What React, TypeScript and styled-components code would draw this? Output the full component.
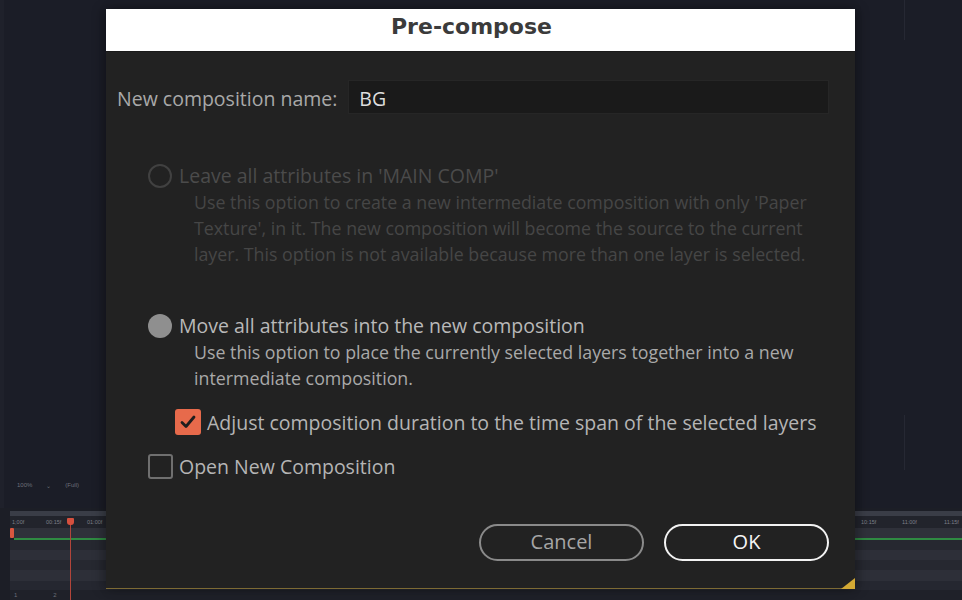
import React from "react";
import styled, { createGlobalStyle } from "styled-components";

const Global = createGlobalStyle`
  html, body { margin: 0; padding: 0; background: #1b1d27; }
  body { width: 962px; height: 600px; overflow: hidden; }
  * { box-sizing: border-box; }
`;

const Stage = styled.div`
  position: relative;
  width: 962px;
  height: 600px;
  overflow: hidden;
  background: #1b1d27;
  font-family: "Open Sans", "Noto Sans", sans-serif;
`;

/* ---------- background application ---------- */
const AppShell = styled.div`
  display: flex;
  flex-direction: column;
  height: 100%;
`;

const Viewer = styled.div`
  position: relative;
  flex: 1;
  display: flex;
  flex-direction: column;
  justify-content: flex-end;
  background: #1b1d27;
  border-left: 4px solid #1f212b;
`;

const ViewerToolbar = styled.div`
  height: 14px;
  margin-bottom: 16px;
  display: flex;
  align-items: center;
  gap: 14px;
  padding-left: 13px;
  font-family: "Liberation Sans", sans-serif;
  font-size: 6px;
  color: #6d707a;
`;

const ToolText = styled.span``;

const Guide = styled.div<{ $top: number; $h: number }>`
  position: absolute;
  left: 900px;
  top: ${(p) => p.$top}px;
  width: 1px;
  height: ${(p) => p.$h}px;
  background: #262833;
`;

const Timeline = styled.div`
  position: relative;
  height: 92px;
  display: flex;
  flex-direction: column;
  background: #1c1e26;
  padding-left: 10px;
`;

const RulerBar = styled.div`
  height: 5px;
  margin-top: 3px;
  background: #3a3d47;
`;

const TimeLabels = styled.div`
  height: 12px;
  display: flex;
  align-items: center;
  background: #22242c;
  font-family: "Liberation Sans", sans-serif;
  font-size: 5.5px;
  color: #7c7f88;
`;

const TimeLabel = styled.span<{ $x: number }>`
  position: absolute;
  left: ${(p) => p.$x}px;
`;

const LayerRow = styled.div<{ $shade: string; $h: number; $green?: boolean }>`
  height: ${(p) => p.$h}px;
  background: ${(p) => p.$shade};
  border-bottom: ${(p) => (p.$green ? "2px solid #2f8b42" : "none")};
  margin-left: ${(p) => (p.$green ? "4px" : "0")};
`;

const RowNumbers = styled.div`
  flex: 1;
  display: flex;
  gap: 36px;
  align-items: center;
  padding-left: 4px;
  font-family: "Liberation Sans", sans-serif;
  font-size: 6px;
  color: #6c6f78;
  background: #1f2129;
`;

const Playhead = styled.div`
  position: absolute;
  left: 70px;
  top: 12px;
  bottom: 0;
  width: 1px;
  background: #b2453a;
  &::before {
    content: "";
    position: absolute;
    left: -3px;
    top: -2px;
    width: 7px;
    height: 7px;
    border-radius: 1px 1px 3px 3px;
    background: #d5503e;
  }
`;

const StartMarker = styled.div`
  position: absolute;
  left: 10px;
  top: 20px;
  width: 4px;
  height: 10px;
  border-radius: 1px;
  background: #d8563f;
`;

/* ---------- dialog ---------- */
const Dialog = styled.div`
  position: absolute;
  left: 106px;
  top: 9px;
  width: 749px;
  height: 580px;
  display: flex;
  flex-direction: column;
  background: #222222;
  box-shadow: -4px 0 10px rgba(0, 0, 0, 0.25), 4px 0 10px rgba(0, 0, 0, 0.25);
`;

const TitleBar = styled.div`
  height: 43px;
  flex: none;
  display: flex;
  align-items: center;
  justify-content: center;
  background: #ffffff;
  border-bottom: 1px solid #1a1a1a;
  font-family: "DejaVu Sans", sans-serif;
  font-weight: 700;
  font-size: 22px;
  color: #3b3b3b;
  padding: 0 18px 8px 0;
`;

const Body = styled.div`
  position: relative;
  flex: 1;
  display: flex;
  flex-direction: column;
  padding: 28px 26px 0 11px;
  border-bottom: 1px solid #7d6a34;
`;

const NameRow = styled.div`
  display: flex;
  align-items: center;
  gap: 11px;
  height: 34px;
`;

const FieldLabel = styled.span`
  font-size: 19.5px;
  color: #a9a9a9;
  white-space: nowrap;
  padding-top: 3px;
`;

const NameInput = styled.div`
  flex: 1;
  height: 34px;
  display: flex;
  align-items: center;
  padding: 3px 0 0 10px;
  background: #1a1a1a;
  border: 1px solid #262626;
  font-size: 19.5px;
  color: #dedede;
`;

const Options = styled.div`
  display: flex;
  flex-direction: column;
  padding-left: 31px;
`;

const Option = styled.div<{ $top: number }>`
  margin-top: ${(p) => p.$top}px;
  display: flex;
  flex-direction: column;
`;

const OptionHead = styled.div`
  display: flex;
  align-items: center;
  gap: 7px;
  height: 26px;
`;

const Radio = styled.span<{ $checked?: boolean; $disabled?: boolean }>`
  width: 24px;
  height: 24px;
  flex: none;
  border-radius: 50%;
  border: ${(p) => (p.$checked ? "none" : `2.5px solid ${p.$disabled ? "#414141" : "#8a8a8a"}`)};
  background: ${(p) => (p.$checked ? "#8f8f8f" : "transparent")};
`;

const OptionLabel = styled.span<{ $disabled?: boolean }>`
  font-size: 19.5px;
  line-height: 26px;
  color: ${(p) => (p.$disabled ? "#4b4b4b" : "#b9b9b9")};
  white-space: nowrap;
`;

const Description = styled.p<{ $disabled?: boolean }>`
  margin: 0;
  padding-left: 46px;
  width: 720px;
  font-size: 17.8px;
  line-height: 26px;
  white-space: nowrap;
  color: ${(p) => (p.$disabled ? "#464646" : "#a9a9a9")};
`;

const CheckRow = styled.label<{ $indent: number; $top: number }>`
  display: flex;
  align-items: center;
  gap: 6px;
  height: 26px;
  margin-top: ${(p) => p.$top}px;
  margin-left: ${(p) => p.$indent}px;
`;

const Box = styled.span<{ $checked?: boolean }>`
  width: ${(p) => (p.$checked ? 26 : 25)}px;
  height: ${(p) => (p.$checked ? 26 : 25)}px;
  flex: none;
  display: flex;
  align-items: center;
  justify-content: center;
  border-radius: 3px;
  background: ${(p) => (p.$checked ? "#e76a4b" : "transparent")};
  border: ${(p) => (p.$checked ? "none" : "2.5px solid #6f6f6f")};
`;

const CheckText = styled.span`
  font-size: 19.5px;
  color: #b5b5b5;
  white-space: nowrap;
`;

const Buttons = styled.div`
  display: flex;
  justify-content: flex-end;
  gap: 20px;
  margin-top: 45px;
`;

const Button = styled.button<{ $primary?: boolean }>`
  width: 165px;
  height: 37px;
  border-radius: 19px;
  background: transparent;
  border: ${(p) => (p.$primary ? "2.5px solid #f2f2f2" : "2px solid #8a8a8a")};
  color: ${(p) => (p.$primary ? "#f6f6f6" : "#a6a6a6")};
  font-family: "Open Sans", "Noto Sans", sans-serif;
  font-size: 20px;
  padding: 0 0 2px;
`;

const Grip = styled.svg`
  position: absolute;
  right: 0;
  bottom: -1px;
`;

export default function App() {
  return (
    <>
      <Global />
      <Stage>
        <AppShell>
          <Viewer>
            <Guide $top={0} $h={40} />
            <Guide $top={415} $h={55} />
            <ViewerToolbar>
              <ToolText>100%</ToolText>
              <ToolText>⌄</ToolText>
              <ToolText>(Full)</ToolText>
            </ViewerToolbar>
          </Viewer>
          <Timeline>
            <RulerBar />
            <TimeLabels>
              <TimeLabel $x={12}>1;00f</TimeLabel>
              <TimeLabel $x={46}>00:15f</TimeLabel>
              <TimeLabel $x={87}>01:00f</TimeLabel>
              <TimeLabel $x={861}>10:15f</TimeLabel>
              <TimeLabel $x={902}>11:00f</TimeLabel>
              <TimeLabel $x={944}>11:15f</TimeLabel>
            </TimeLabels>
            <LayerRow $shade="#2f313a" $h={12} $green />
            <LayerRow $shade="#262830" $h={10} />
            <LayerRow $shade="#2d2f38" $h={10} />
            <LayerRow $shade="#262830" $h={10} />
            <LayerRow $shade="#2d2f38" $h={11} />
            <LayerRow $shade="#252730" $h={9} />
            <RowNumbers>
              <span>1</span>
              <span>2</span>
            </RowNumbers>
            <StartMarker />
            <Playhead />
          </Timeline>
        </AppShell>

        <Dialog>
          <TitleBar>Pre-compose</TitleBar>
          <Body>
            <NameRow>
              <FieldLabel>New composition name:</FieldLabel>
              <NameInput>BG</NameInput>
            </NameRow>

            <Options>
              <Option $top={49}>
                <OptionHead>
                  <Radio $disabled />
                  <OptionLabel $disabled>Leave all attributes in 'MAIN COMP'</OptionLabel>
                </OptionHead>
                <Description $disabled>
                  Use this option to create a new intermediate composition with only 'Paper
                  <br />
                  Texture', in it. The new composition will become the source to the current
                  <br />
                  layer. This option is not available because more than one layer is selected.
                </Description>
              </Option>

              <Option $top={46}>
                <OptionHead>
                  <Radio $checked />
                  <OptionLabel>Move all attributes into the new composition</OptionLabel>
                </OptionHead>
                <Description>
                  Use this option to place the currently selected layers together into a new
                  <br />
                  intermediate composition.
                </Description>
              </Option>

              <CheckRow $indent={27} $top={18}>
                <Box $checked>
                  <svg width="20" height="20" viewBox="0 0 20 20">
                    <path d="M4 10.5 L8 14.5 L16 5" fill="none" stroke="#1e1e1e" strokeWidth="2.8" strokeLinecap="round" strokeLinejoin="round" />
                  </svg>
                </Box>
                <CheckText>Adjust composition duration to the time span of the selected layers</CheckText>
              </CheckRow>

              <CheckRow $indent={0} $top={18}>
                <Box />
                <CheckText>Open New Composition</CheckText>
              </CheckRow>
            </Options>

            <Buttons>
              <Button>Cancel</Button>
              <Button $primary>OK</Button>
            </Buttons>

            <Grip width="14" height="11" viewBox="0 0 14 11">
              <path d="M14 0 L14 11 L0 11 Z" fill="#d3a934" />
            </Grip>
          </Body>
        </Dialog>
      </Stage>
    </>
  );
}
